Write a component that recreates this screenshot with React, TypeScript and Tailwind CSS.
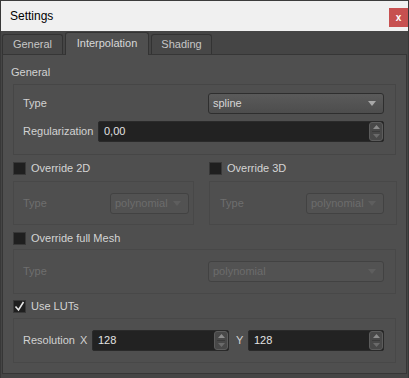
import React from 'react';

const ComboArrow = ({ dim }: { dim?: boolean }) => (
  <svg width="8" height="5" viewBox="0 0 8 5" className="shrink-0">
    <path d="M0 0h8L4 5z" fill={dim ? '#5e5e5e' : '#a8a8a8'} />
  </svg>
);

const Combo = ({ value, disabled, className }: { value: string; disabled?: boolean; className: string }) => (
  <div
    className={
      'h-[21px] rounded-[3px] border flex items-center justify-between pl-[4px] pr-[7px] ' +
      (disabled
        ? 'border-[#424242] bg-[#525252] text-[#6c6c6c]'
        : 'border-[#2e2e2e] bg-gradient-to-b from-[#5a5a5a] to-[#4d4d4d] text-[#d6d6d6]') +
      ' ' +
      className
    }
  >
    <span>{value}</span>
    <ComboArrow dim={disabled} />
  </div>
);

const SpinInput = ({ value, className }: { value: string; className: string }) => (
  <div className={'h-[21px] rounded-[2px] border border-[#2a2a2a] bg-[#222222] flex items-center ' + className}>
    <span className="flex-1 pl-[5px] text-[#e2e2e2]">{value}</span>
    <div className="w-[14px] h-[19px] rounded-[3px] border border-[#5c5c5c] bg-[#484848] flex flex-col items-center justify-center gap-[2px]">
      <svg width="7" height="4" viewBox="0 0 7 4">
        <path d="M0 4L3.5 0L7 4z" fill="#8c8c8c" />
      </svg>
      <div className="w-[8px] h-px bg-[#3a3a3a]" />
      <svg width="7" height="4" viewBox="0 0 7 4">
        <path d="M0 0h7L3.5 4z" fill="#6a6a6a" />
      </svg>
    </div>
  </div>
);

const Check = ({ label, checked }: { label: string; checked?: boolean }) => (
  <div className="h-[13px] flex items-center gap-[5px]">
    <div className="w-[13px] h-[13px] bg-[#1f1f1f] border border-[#383838] flex items-center justify-center">
      {checked && (
        <svg width="11" height="11" viewBox="0 0 11 11">
          <path d="M1.5 5.5L4.5 9L9.5 1" fill="none" stroke="#e6e6e6" strokeWidth="1.6" />
        </svg>
      )}
    </div>
    <span className="text-[#d4d4d4] leading-[13px]">{label}</span>
  </div>
);

export default function App() {
  return (
    <div className="w-[409px] h-[378px] bg-[#454545] border-x border-[#383838] flex flex-col font-['Liberation_Sans',Arial,sans-serif] text-[11px]">
      {/* title bar */}
      <div className="h-[31px] shrink-0 border-t border-[#3c3c3c] bg-[#f0f0f0] flex items-start justify-between pl-[9px]">
        <span className="text-[12px] text-black leading-[30px]">Settings</span>
        <div className="mt-[7px] w-[19px] h-[19px] bg-[#c75050] flex items-center justify-center text-white font-bold text-[10px] leading-none">
          x
        </div>
      </div>

      {/* tabs */}
      <div className="h-[23px] shrink-0 flex items-end pl-[1px] gap-[2px] bg-[#454545]">
        <div className="w-[61px] h-[20px] rounded-t-[3px] border border-b-0 border-[#333333] bg-[#474747] text-[#c6c6c6] flex items-center justify-center">
          General
        </div>
        <div className="relative z-10 -mb-px w-[84px] h-[23px] rounded-t-[3px] border border-b-0 border-[#333333] bg-[#4f4f4f] text-[#d8d8d8] flex items-center justify-center pb-[2px]">
          Interpolation
        </div>
        <div className="w-[61px] h-[20px] rounded-t-[3px] border border-b-0 border-[#333333] bg-[#474747] text-[#c6c6c6] flex items-center justify-center">
          Shading
        </div>
      </div>

      {/* pane */}
      <div className="flex-1 mx-[1px] mb-[4px] border border-[#363636] bg-[#4f4f4f] px-[10px] pt-[8px] flex flex-col">
        <div className="h-[18px] leading-[18px] -ml-[2px] text-[#d2d2d2]">General</div>

        <div className="mt-[3px] h-[71px] border border-[#464646] pl-[9px] pr-[11px] pt-[8px] flex flex-col">
          <div className="h-[21px] flex items-center justify-between">
            <span className="text-[#d2d2d2]">Type</span>
            <Combo value="spline" className="w-[176px]" />
          </div>
          <div className="mt-[7px] flex items-center">
            <span className="w-[75px] text-[#d2d2d2]">Regularization</span>
            <SpinInput value="0,00" className="flex-1" />
          </div>
        </div>

        <div className="mt-[7px] grid grid-cols-[181px_188px] gap-x-[15px]">
          <div className="flex flex-col">
            <Check label="Override 2D" />
            <div className="mt-[6px] h-[44px] border border-[#484848] pl-[9px] pr-[4px] flex items-center justify-between">
              <span className="text-[#6e6e6e]">Type</span>
              <Combo value="polynomial" disabled className="w-[79px]" />
            </div>
          </div>
          <div className="flex flex-col">
            <Check label="Override 3D" />
            <div className="mt-[6px] h-[44px] border border-[#484848] pl-[10px] pr-[12px] flex items-center justify-between">
              <span className="text-[#6e6e6e]">Type</span>
              <Combo value="polynomial" disabled className="w-[78px]" />
            </div>
          </div>
        </div>

        <div className="mt-[7px]">
          <Check label="Override full Mesh" />
        </div>
        <div className="mt-[4px] h-[45px] border border-[#484848] pl-[9px] pr-[11px] flex items-center justify-between">
          <span className="text-[#6e6e6e]">Type</span>
          <Combo value="polynomial" disabled className="w-[176px]" />
        </div>

        <div className="mt-[6px]">
          <Check label="Use LUTs" checked />
        </div>
        <div className="mt-[5px] h-[45px] border border-[#484848] pl-[9px] pr-[11px] flex items-center">
          <span className="w-[57px] text-[#d2d2d2]">Resolution</span>
          <span className="w-[12px] text-[#d2d2d2]">X</span>
          <SpinInput value="128" className="w-[137px]" />
          <span className="w-[19px] pl-[7px] text-[#d2d2d2]">Y</span>
          <SpinInput value="128" className="flex-1" />
        </div>
      </div>
    </div>
  );
}
